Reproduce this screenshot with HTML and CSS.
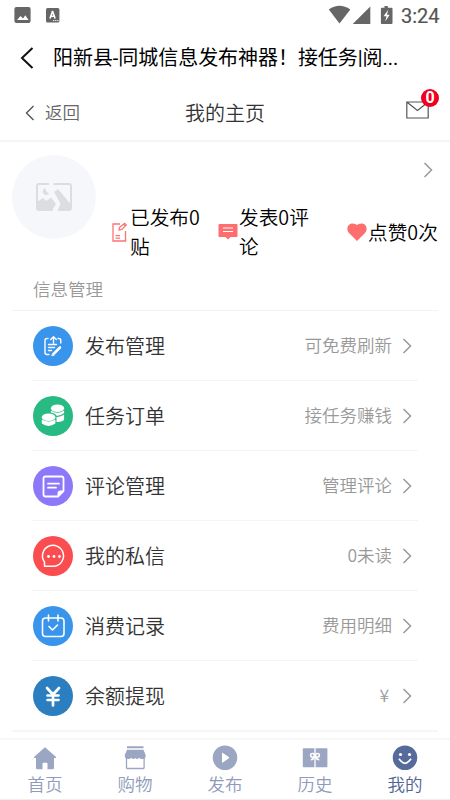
FILE: index.html
```html
<!DOCTYPE html>
<html lang="zh-CN">
<head>
<meta charset="utf-8">
<title>我的主页</title>
<link rel="stylesheet" href="styles.css">
</head>
<body>
<div class="app">
  <div class="status">
    <svg width="70" height="30" viewBox="0 0 70 30"><rect x="14.4" y="7" width="16.2" height="16" rx="2" fill="#666"/><path d="M17 20l3.5-4 2.5 2.5 2.3-3.3 3.2 4.8z" fill="#fff"/><rect x="46" y="8" width="13.4" height="14.5" rx="1.5" fill="#666"/><path d="M50 18.5l2.4-7h.3l2.4 7M50.8 16.2h3.5" fill="none" stroke="#fff" stroke-width="1.6"/><path d="M53 20.6h6" stroke="#fff" stroke-width="1" stroke-dasharray="1.3 .8"/></svg>
    <div class="status-right">
      <svg width="66" height="30" viewBox="328 0 66 30"><path d="M328.8 9.5Q339.5 2 350.3 9.5L339.5 23.5z" fill="#666"/><path d="M370.3 6.4V24h-17.6z" fill="#666"/><path d="M384.5 6h3.3v1.7h3.7q1 0 1 1V23q0 1-1 1h-9.6q-1 0-1-1V8.700q0-1 1-1h2.600z" fill="#666"/><path d="M388.300 9.800l-4.800 6.500h3l-1.300 5.200 4.500-6.700h-2.800z" fill="#fff"/></svg>
      <span>3:24</span>
    </div>
  </div>
  <div class="titlebar">
    <svg width="14" height="24" viewBox="0 0 14 24"><path d="M12.500 2L2 12l10.500 10" fill="none" stroke="#111" stroke-width="2"/></svg>
    <h1>阳新县-同城信息发布神器！接任务|阅...</h1>
  </div>
  <header class="header">
    <div class="back"><svg width="10" height="16" viewBox="0 0 10 16"><path d="M8.500 1L1.500 8l7 7" fill="none" stroke="#555" stroke-width="1.400"/></svg><span>返回</span></div>
    <h2>我的主页</h2>
    <div class="mail"><svg width="23" height="18" viewBox="0 0 23 18"><path d="M.8 1h21.400v16H.8zM.8 1l10.700 8.500L22.200 1" fill="none" stroke="#555" stroke-width="1.200"/></svg><b class="badge">0</b></div>
  </header>
  <section class="profile">
    <div class="avatar"><svg width="36" height="28" viewBox="0 0 36 28"><path d="M13 1H3Q1 1 1 3v22q0 2 2 2h14M17.500 1H33q2 0 2 2v22q0 2-2 2H22" fill="none" stroke="#dcdddf" stroke-width="2"/><path d="M9.500 5a3.500 3.500 0 1 0 3.700 5.200Q9.500 9.500 9.500 5z" fill="#dcdddf"/><path d="M1 19l6-4 3.500 3 4.500-3.500 5 6.500-4 6H2zM18 9l4-3 13 15.500V27H22l2.500-6.500z" fill="#dcdddf"/></svg></div>
    <div class="info">
      <svg class="more" width="10" height="16" viewBox="0 0 10 16"><path d="M1.500 1l7 7-7 7" fill="none" stroke="#999" stroke-width="1.500"/></svg>
      <div class="stats">
        <div class="stat first"><svg width="18" height="20" viewBox="0 0 18 20"><path d="M9 2H2v17h12.500V9" fill="none" stroke="#ff7272" stroke-width="1.300"/><path d="M8 8l.7-2.800 5-4 1.600 1.700-4.500 4.500zM12.500 2.200l1.600 1.700M4.500 13.700h4.600M4.500 16.200h4.600" fill="none" stroke="#ff7272" stroke-width="1.200"/></svg><span>已发布0贴</span></div>
        <div class="stat second"><svg width="20" height="20" viewBox="0 0 20 20"><path d="M1.500 2h17q1 0 1 1v11q0 1-1 1h-6L10 17.500 7.500 15h-6q-1 0-1-1V3q0-1 1-1z" fill="#ff6e6e"/><path d="M5 6h10M5 9.500h10" stroke="#fff" stroke-width="1.200"/></svg><span>发表0评论</span></div>
        <div class="stat third"><svg width="20" height="20" viewBox="0 0 20 20"><path d="M10 19L2 11C-2 6 2 1.200 5.700 1.500Q8.600 1.600 10 3 11.400 1.600 14.300 1.500C18 1.200 22 6 18 11z" fill="#ff6e6e"/></svg><span>点赞0次</span></div>
      </div>
    </div>
  </section>
  <h3 class="section-title">信息管理</h3>
  <ul class="menu">
    <li><svg class="icon blue" viewBox="0 0 40 40"><path d="M15 12.500h-1q-2 0-2 2v12q0 2 2 2h2M25 12.500h.800q2 0 2 2V17M20.500 17v-6M17.700 13.500l2.800-2.800 2.800 2.800M15.500 18.500h8M15.500 21.500h6M15.500 24.500h3" stroke-width="1.400"/><path d="M27 21.500l-6 6" stroke-width="2.600"/><path d="M19 29.500l.5-2 1.500 1.300z" stroke-width="1"/></svg><span class="label">发布管理</span><span class="value">可免费刷新</span><svg class="chevron" viewBox="0 0 10 16"><path d="M1.500 1l7 7-7 7"/></svg></li>
    <li><svg class="icon green" viewBox="0 0 40 40"><g fill="#fff" stroke="none"><ellipse cx="24.500" cy="12.300" rx="6.600" ry="3.800"/><path d="M17.900 14.500q6.600 4.500 13.200 0V17q-3.500 3-7.500 2.700-1-2.200-5.700-3.200zM23.500 20.900q4.600.2 7.600-2.400v5.500q-2.500 2.400-7.600 2z"/><ellipse cx="15.600" cy="21.300" rx="6.800" ry="3.800"/><path d="M8.800 23.400q6.800 4.200 13.600 0v4.200q-6.800 4.600-13.600 0z"/></g></svg><span class="label">任务订单</span><span class="value">接任务赚钱</span><svg class="chevron" viewBox="0 0 10 16"><path d="M1.500 1l7 7-7 7"/></svg></li>
    <li><svg class="icon purple" viewBox="0 0 40 40"><path d="M12.500 10.500h16q2 0 2 2V25l-5.500 5.500H12.500q-2 0-2-2v-16q0-2 2-2zM15 17.700h11M15 21.700h8"/><path d="M30.500 25H27q-2 0-2 2v3.500z" fill="#fff" stroke-width="1"/></svg><span class="label">评论管理</span><span class="value">管理评论</span><svg class="chevron" viewBox="0 0 10 16"><path d="M1.500 1l7 7-7 7"/></svg></li>
    <li><svg class="icon red" viewBox="0 0 40 40"><path d="M11.500 30.300V26A10.500 10.500 0 1 1 20.500 30.300z" stroke-width="1.500"/><g fill="#fff" stroke="none"><circle cx="15.500" cy="20.500" r="1.400"/><circle cx="21" cy="20.500" r="1.400"/><circle cx="26.500" cy="20.500" r="1.400"/></g></svg><span class="label">我的私信</span><span class="value">0未读</span><svg class="chevron" viewBox="0 0 10 16"><path d="M1.500 1l7 7-7 7"/></svg></li>
    <li><svg class="icon blue" viewBox="0 0 40 40"><rect x="9.500" y="12" width="21.500" height="18.500" rx="3" stroke-width="1.600"/><path d="M15.500 9v6M25 9v6M16 20.500l3.500 3.500 5-5" stroke-width="1.600"/></svg><span class="label">消费记录</span><span class="value">费用明细</span><svg class="chevron" viewBox="0 0 10 16"><path d="M1.500 1l7 7-7 7"/></svg></li>
    <li><svg class="icon navy" viewBox="0 0 40 40"><path d="M14 12l6 6.500 6-6.500M14.500 19.500h11M14.500 24h11M20 19v10.500" stroke-width="2.700"/></svg><span class="label">余额提现</span><span class="value yen">¥</span><svg class="chevron" viewBox="0 0 10 16"><path d="M1.500 1l7 7-7 7"/></svg></li>
  </ul>
  <nav class="tabs">
    <a><svg viewBox="0 0 26 26"><path d="M13 2.200L24 12v1h-2v10q0 1.200-1.200 1.200H15.500v-5.500q0-1-1-1h-3q-1 0-1 1v5.500H5.200Q4 24.200 4 23V13H2v-1z"/></svg><span>首页</span></a>
    <a><svg viewBox="0 0 26 26"><path d="M5 1.300h16.500v1.900H5zM5 4.800h16.500l2.200 5.500q.2 3.700-3.300 3.700-2 .4-3.400-1.200-1.900 2.400-3.800.2-1.900 2.200-3.800-.2-1.400 1.500-3.400 1.200-3.500 0-3.300-3.700z"/><path d="M4.500 12v10.700q0 .8.800.8h16q.8 0 .8-.8V12" fill="none" stroke="#9ba6c3" stroke-width="1.300"/></svg><span>购物</span></a>
    <a><svg viewBox="0 0 26 26"><circle cx="13" cy="12.700" r="12.300"/><path d="M10.500 8.200v9l6.500-4.500z" fill="#fff" stroke="#fff" stroke-linejoin="round"/></svg><span>发布</span></a>
    <a><svg viewBox="0 0 26 26"><rect x=".8" y="3.200" width="24.600" height="19" rx="1"/><path d="M13 3v6M13 12v10.500" stroke="#fff" stroke-width="1.300"/><g fill="none" stroke="#fff" stroke-width="1.500"><circle cx="10.500" cy="10.300" r="1.900"/><circle cx="15.500" cy="10.300" r="1.900"/><path d="M12.500 11.800q-1 3-3.800 3M13.500 11.800q1 3 3.800 3"/></g></svg><span>历史</span></a>
    <a class="active"><svg viewBox="0 0 26 26"><circle cx="13" cy="12.700" r="12.300"/><circle cx="8.500" cy="9.500" r="1.600" fill="#fff"/><circle cx="17.500" cy="9.500" r="1.600" fill="#fff"/><path d="M7 13.800q6 9 12 0" fill="none" stroke="#fff" stroke-width="1.700"/></svg><span>我的</span></a>
  </nav>
</div>
</body>
</html>
```
FILE: styles.css
```css
* { box-sizing: border-box; }
body { margin: 0; background: #fff; color: #000; font-family: "Noto Sans CJK SC", sans-serif; font-weight: 350; }
h1, h2, h3, ul { margin: 0; padding: 0; font-weight: 350; }
svg { display: block; flex: none; }
.app { width: 450px; height: 800px; display: flex; flex-direction: column; overflow: hidden; }
.status { height: 30px; flex: none; display: flex; justify-content: space-between; }
.status-right { display: flex; width: 122px; gap: 7px; align-items: center; }
.status-right span { font: 400 20px/32px Roboto, sans-serif; color: #555; -webkit-text-stroke: .2px #555; padding-top: 1px; }
.titlebar { height: 56px; flex: none; display: flex; align-items: center; padding-left: 20px; gap: 19px; }
.titlebar h1 { font-family: Roboto, "Noto Sans CJK SC", sans-serif; font-size: 20px; font-weight: 400; line-height: 28px; white-space: nowrap; letter-spacing: -.05px; }
.header { height: 56px; flex: none; display: grid; grid-template-columns: 1fr auto 1fr; align-items: center; padding: 0 20px 2px; border-bottom: 2px solid #f5f5f5; }
.back { display: flex; align-items: center; gap: 10px; padding: 1px 0 0 5px; font-size: 17.5px; line-height: 26px; color: #666; }
.back span { margin-top: -2px; }
.header h2 { font-size: 20px; line-height: 28px; color: #333; padding-top: 1px; }
.mail { justify-self: end; position: relative; margin: -4px 1px 0 0; }
.badge { position: absolute; right: -10px; top: -12px; width: 18px; height: 18px; border-radius: 50%; background: #f00020; color: #fff; font: 700 16px/18px Roboto, sans-serif; text-align: center; }
.profile { height: 125px; flex: none; display: flex; padding: 13px 12px 0; }
.avatar { width: 84px; height: 84px; border-radius: 50%; background: #f6f7fa; display: flex; align-items: center; justify-content: center; }
.info { flex: 1; display: flex; flex-direction: column; padding-left: 15px; }
.more { align-self: flex-end; margin: 7px 5px 24px 0; }
.stats { display: flex; font-size: 19.7px; line-height: 29px; align-items: center; }
.stat { display: flex; align-items: center; gap: 1px; }
.stat svg { margin-top: 1px; }
.stat span { flex: 1; }
.first { width: 92px; }
.second { width: 94px; margin-left: 15px; }
.third { width: 91px; margin-left: 35px; white-space: nowrap; }
.section-title { flex: none; height: 44px; margin: 0 12px; padding: 10px 0 0 21px; border-bottom: 1px solid #f3f3f3; font-size: 17.5px; line-height: 24px; color: #999; }
.menu { list-style: none; flex: none; margin: 0 12px; padding: 0 20px; border-bottom: 2px solid #f6f6f6; }
.menu li { height: 70px; display: flex; align-items: center; border-bottom: 1px solid #f2f4f5; padding: 1px 6px 0 .5px; }
.menu li:last-child { height: 69px; border: 0; }
.icon { width: 40px; height: 40px; border-radius: 50%; fill: none; stroke: #fff; stroke-width: 1.8; stroke-linecap: round; stroke-linejoin: round; }
.blue { background: #3994ec; }
.green { background: #27ba82; }
.purple { background: #8d78fa; }
.red { background: #fb4c4f; }
.navy { background: #2b7fc1; }
.label { font-size: 20px; line-height: 28px; color: #333; margin: 0 auto 1px 12.5px; }
.value { font-size: 17.5px; line-height: 26px; color: #999; margin: 0 10px 3px 0; }
.yen { margin-right: 13px; }
.chevron { width: 10px; height: 16px; fill: none; stroke: #999; stroke-width: 1.5; }
.tabs { height: 62px; flex: none; margin-top: 6px; display: grid; grid-template-columns: repeat(5, 1fr); border-top: 2px solid #f7f7f7; border-bottom: 1px solid #eee; }
.tabs a { display: flex; flex-direction: column; align-items: center; padding-top: 5px; color: #909bbb; fill: #9ba6c3; font-size: 17.5px; line-height: 25px; }
.tabs svg { width: 26px; height: 26px; }
.tabs .active { color: #4f6496; fill: #566b9b; }
```
